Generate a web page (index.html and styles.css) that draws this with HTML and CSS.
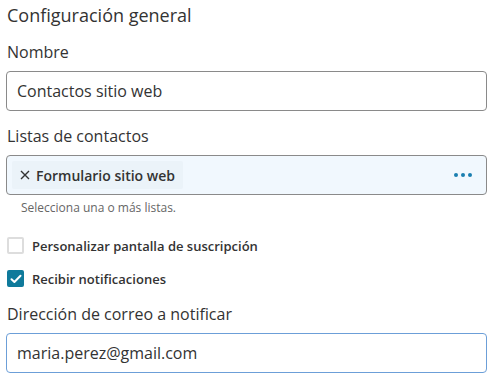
FILE: index.html
```html
<!DOCTYPE html>
<html lang="es">
<head>
  <meta charset="UTF-8" />
  <title>Configuración general</title>
  <link rel="stylesheet" href="styles.css">
</head>
<body>
  <div class="panel">
    <h2 class="title">Configuración general</h2>

    <div class="field">
      <label class="label" for="nombre">Nombre</label>
      <input class="text-input" id="nombre" type="text" value="Contactos sitio web" />
    </div>

    <div class="field">
      <span class="label">Listas de contactos</span>
      <div class="multi">
        <span class="chip">
          <svg class="chip-x" width="10" height="10" viewBox="0 0 10 10"><path d="M1 1 9 9M9 1 1 9" stroke="#333" stroke-width="1.4"/></svg>
          Formulario sitio web
        </span>
        <span class="dots"><i></i><i></i><i></i></span>
      </div>
      <p class="help">Selecciona una o más listas.</p>
    </div>

    <label class="check">
      <span class="box"></span>
      Personalizar pantalla de suscripción
    </label>
    <label class="check">
      <span class="box checked">
        <svg width="12" height="10" viewBox="0 0 12 10"><path d="M1.5 5.2 4.4 8 10.5 1.8" fill="none" stroke="#fff" stroke-width="2" stroke-linecap="round" stroke-linejoin="round"/></svg>
      </span>
      Recibir notificaciones
    </label>

    <div class="field">
      <label class="label" for="correo">Dirección de correo a notificar</label>
      <input class="text-input focused" id="correo" type="text" value="maria.perez@gmail.com" />
    </div>
  </div>
</body>
</html>
```

FILE: styles.css
```css
body {
  margin: 0;
  padding: 0 8px 0 6px;
  font-family: 'Open Sans', sans-serif;
  color: #333;
  background: #fff;
}
.title {
  font-size: 18px;
  font-weight: 400;
  margin: 3px 0 0 1px;
  line-height: 24px;
}
.field {
  margin-top: 14px;
}
.label {
  display: block;
  font-size: 16px;
  line-height: 22px;
  margin: 0 0 8px 1px;
}
.text-input {
  display: block;
  box-sizing: border-box;
  width: 100%;
  height: 40px;
  padding: 0 10px;
  font-family: inherit;
  font-size: 16px;
  color: #333;
  border: 1px solid #8a8a8a;
  border-radius: 4px;
  outline: none;
}
.text-input.focused {
  border-color: #6c9fd8;
}
.multi {
  box-sizing: border-box;
  height: 40px;
  border: 1px solid #8a8a8a;
  border-radius: 4px;
  background: #f1f8fe;
  display: flex;
  align-items: center;
  justify-content: space-between;
  padding: 0 14px 0 5px;
}
.chip {
  display: flex;
  align-items: center;
  height: 28px;
  padding: 0 8px;
  background: #ebf3f9;
  font-size: 14px;
  font-weight: 600;
  border-radius: 2px;
}
.chip-x {
  margin-right: 6px;
}
.dots {
  display: flex;
  gap: 3px;
}
.dots i {
  width: 4px;
  height: 4px;
  border-radius: 50%;
  background: #1a7fb0;
}
.help {
  margin: 4px 0 0 15px;
  font-size: 12px;
  color: #666;
}
.check {
  display: flex;
  align-items: center;
  gap: 8px;
  margin: 21px 0 0 1px;
  font-size: 13px;
  font-weight: 600;
  height: 17px;
}
.check + .check {
  margin-top: 16px;
}
.box {
  box-sizing: border-box;
  width: 17px;
  height: 17px;
  border: 2px solid #ddd;
  border-radius: 2px;
  display: flex;
  align-items: center;
  justify-content: center;
}
.box.checked {
  background: #0f7a9b;
  border-color: #0f7a9b;
}
.check + .field {
  margin-top: 16px;
}
```
